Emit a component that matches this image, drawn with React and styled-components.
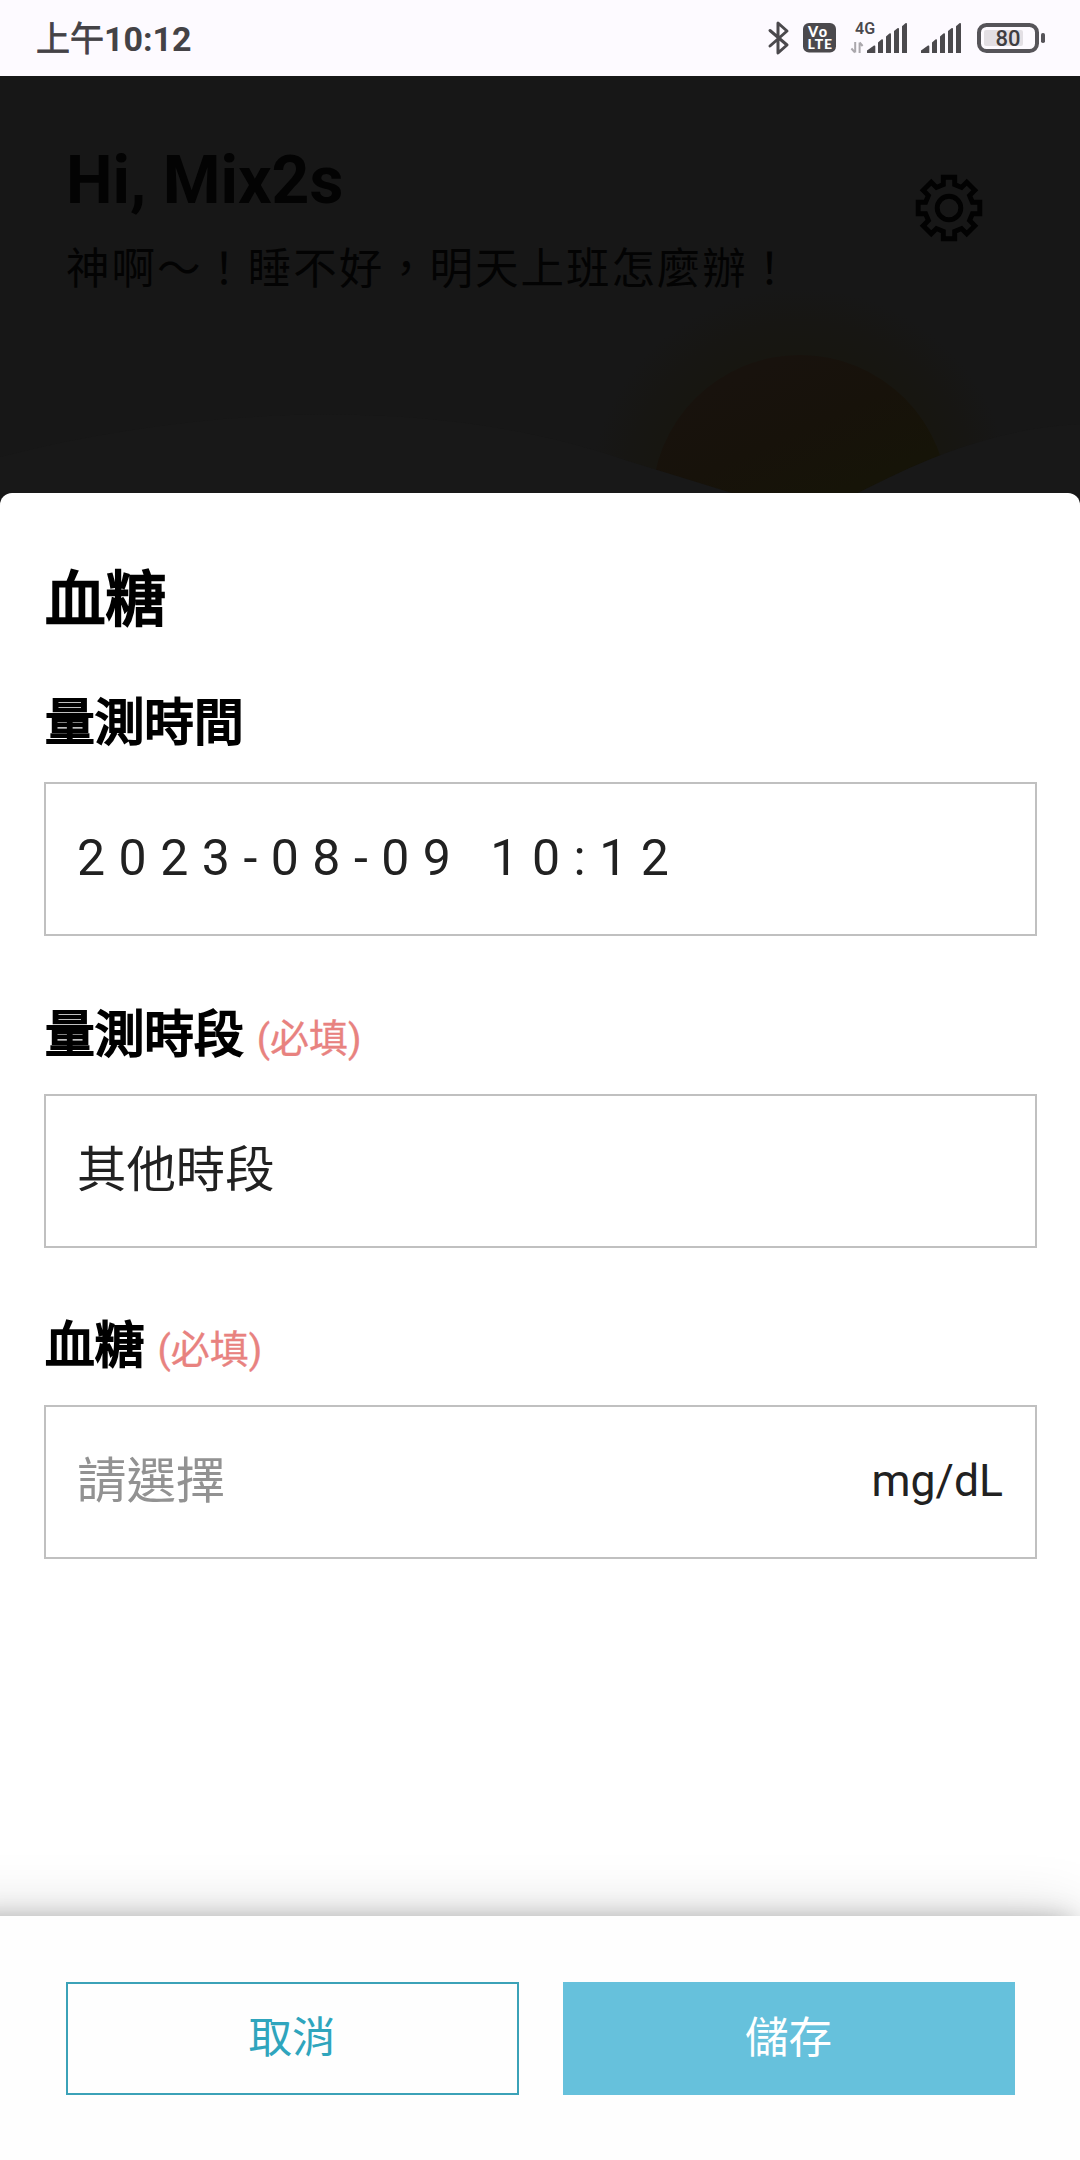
import React from "react";
import styled, { createGlobalStyle } from "styled-components";

const GlobalStyle = createGlobalStyle`
  *, *::before, *::after { box-sizing: border-box; }
  html, body { margin: 0; padding: 0; background: #fff; }
`;

const Screen = styled.div`
  width: 1080px;
  height: 2160px;
  overflow: hidden;
  display: flex;
  flex-direction: column;
  background: #171717;
  font-family: Roboto, "Noto Sans CJK TC", sans-serif;
  color: #212121;
`;

const StatusBar = styled.header`
  flex: none;
  height: 76px;
  padding: 0 35px 0 36px;
  display: flex;
  align-items: center;
  justify-content: space-between;
  background: #fdfaff;
  color: #444246;
`;

const Clock = styled.div`
  padding-top: 1px;
  font-size: 34px;
  line-height: 76px;
  font-weight: 400;
  -webkit-text-stroke: 0.8px currentColor;
  white-space: nowrap;
`;

const ClockDigits = styled.span`
  font-weight: 700;
  -webkit-text-stroke: 0;
`;

const StatusIcons = styled.div`
  display: flex;
  align-items: center;
  height: 76px;
`;

const StatusIcon = styled.svg`
  display: block;
  flex: none;
  margin-left: ${(p) => p.$gap || 0}px;
  overflow: visible;
`;

const Hero = styled.section`
  flex: none;
  height: 417px;
  display: grid;
  grid-template: 100% / 100%;
`;

const Landscape = styled.svg`
  grid-area: 1 / 1;
  display: block;
`;

const HeroContent = styled.div`
  grid-area: 1 / 1;
  z-index: 1;
  padding: 64px 95px 0 66px;
  display: flex;
  justify-content: space-between;
  align-items: flex-start;
  color: #030303;
`;

const Greeting = styled.h1`
  margin: 0;
  padding-top: 1px;
  font-size: 66px;
  line-height: 80px;
  font-weight: 700;
`;

const Quote = styled.p`
  margin: 19px 0 0;
  font-size: 43.5px;
  line-height: 60px;
  letter-spacing: 1.95px;
  white-space: nowrap;
`;

const SettingsIcon = styled.svg`
  display: block;
  margin-top: 32px;
`;

const Sheet = styled.main`
  flex: 1;
  min-height: 0;
  display: flex;
  flex-direction: column;
  background: #fff;
  border-radius: 12px 12px 0 0;
  overflow: hidden;
`;

const Form = styled.div`
  flex: 1;
  padding: 68px 43px 0 44px;
`;

const Title = styled.h2`
  margin: 0 0 46px;
  padding-left: 1px;
  font-size: 60.5px;
  line-height: 80px;
  font-weight: 400;
  -webkit-text-stroke: 2.5px currentColor;
  color: #000;
`;

const Field = styled.div`
  margin-bottom: ${(p) => p.$space || 0}px;
`;

const Label = styled.div`
  height: 72px;
  margin-bottom: 23px;
  padding-left: 1px;
  font-size: 49.7px;
  line-height: 72px;
  color: #000;
  -webkit-text-stroke: 2.2px currentColor;
  white-space: nowrap;
`;

const Required = styled.span`
  margin-left: 13px;
  font-size: 39px;
  -webkit-text-stroke: 0.3px currentColor;
  color: #e8827f;
`;

const InputBox = styled.div`
  height: 154px;
  padding: 0 32px 3px 31px;
  display: flex;
  align-items: center;
  justify-content: space-between;
  border: 2px solid #c0c0c0;
`;

const Value = styled.span`
  font-size: ${(p) => p.$size || 49.4}px;
  line-height: 72px;
  letter-spacing: ${(p) => p.$spacing || 0}px;
  color: ${(p) => (p.$placeholder ? "#929292" : "#212121")};
`;

const Unit = styled.span`
  font-size: 44.5px;
  line-height: 72px;
`;

const Footer = styled.footer`
  flex: none;
  height: 244px;
  padding: 66px 65px 65px 66px;
  display: grid;
  grid-template-columns: 453px 452px;
  gap: 44px;
  background: #fefefe;
  box-shadow: -20px 15px 24px 12px rgba(0, 0, 0, 0.27), -34px 32px 60px 30px rgba(0, 0, 0, 0.18);
`;

const Button = styled.button`
  appearance: none;
  height: 113px;
  margin: 0;
  padding: 1px 1px 0 0;
  border: 2px solid ${(p) => (p.$primary ? "#66c1dc" : "#3ba2b8")};
  border-radius: 0;
  background: ${(p) => (p.$primary ? "#66c1dc" : "#fefefe")};
  color: ${(p) => (p.$primary ? "#fff" : "#2fa5bd")};
  font-family: inherit;
  font-size: 43.5px;
  line-height: 60px;
`;

function Bluetooth() {
  return (
    <StatusIcon width="22" height="36" viewBox="0 0 22 36" fill="none" stroke="#4b494d" strokeWidth="3" strokeLinejoin="round" strokeLinecap="round">
      <path d="M2 10.5 19 25 10 33V3l9 8L2 26" />
    </StatusIcon>
  );
}

function VoLte() {
  return (
    <StatusIcon $gap={13} width="33" height="30" viewBox="0 0 33 30">
      <rect width="33" height="29.5" rx="6" fill="#4b494d" />
      <g fill="#fff" fontFamily="Lato, sans-serif" fontWeight="900">
        <text x="5" y="13.5" fontSize="14.5" textLength="19">Vo</text>
        <text x="4.6" y="26.3" fontSize="14" textLength="24.5">LTE</text>
      </g>
    </StatusIcon>
  );
}

function Bars() {
  return (
    <g fill="#4b494d">
      <path d="M0 31V28.5L7 23.6Q8.3 23 8.3 24.5V31Z" />
      <path d="M11 31V20.5L14.4 17.4Q16 16.6 16 18.2V31Z" />
      <path d="M19 31V14.5L22.4 11.6Q24 10.8 24 12.4V31Z" />
      <path d="M27 31V9L30.4 6.2Q32 5.4 32 7V31Z" />
      <path d="M35 31V4.2L38.4 1.3Q40 .5 40 2.2V31Z" />
    </g>
  );
}

function MobileData() {
  return (
    <StatusIcon $gap={15} width="56" height="44" viewBox="0 -6 56 44">
      <text x="4" y="11.5" fontSize="16" fontWeight="600" fontFamily="Roboto, sans-serif" fill="#4b494d">4G</text>
      <path d="M4.2 20v10.5M.4 26.5l3.6 4M8.6 31V20.5M8.6 20.5l3 3.5" stroke="#aaa7ac" strokeWidth="2" fill="none" />
      <g transform="translate(16 0)"><Bars /></g>
    </StatusIcon>
  );
}

function Signal() {
  return (
    <StatusIcon $gap={14} width="40" height="32" viewBox="0 0 40 32">
      <Bars />
    </StatusIcon>
  );
}

function Battery() {
  return (
    <StatusIcon $gap={16} width="68" height="30" viewBox="0 0 68 30">
      <rect x="2" y="2" width="58" height="26" rx="7.5" fill="none" stroke="#565459" strokeWidth="4" />
      <rect x="7" y="7" width="39" height="16" rx="2" fill="#e3dfe4" />
      <rect x="64" y="10" width="4" height="10" rx="1.8" fill="#565459" />
      <text x="18.5" y="23" fontSize="22" fontWeight="500" fontFamily="Roboto, sans-serif" fill="#3f3d41">80</text>
    </StatusIcon>
  );
}

const TOOTH = [[-5.7, -23.4], [-5.7, -30.8], [5.7, -30.8], [5.7, -23.4]];
const gearPoints = Array.from({ length: 8 }, (_, i) => {
  const a = (i * Math.PI) / 4;
  return TOOTH.map(([x, y]) =>
    [x * Math.cos(a) - y * Math.sin(a), x * Math.sin(a) + y * Math.cos(a)]
      .map((v) => v.toFixed(2))
      .join(",")
  ).join(" ");
}).join(" ");

function Gear() {
  return (
    <SettingsIcon width="72" height="72" viewBox="-36 -36 72 72" fill="none" stroke="#020202" strokeWidth="4.9">
      <polygon points={gearPoints} />
      <circle r="11.8" />
    </SettingsIcon>
  );
}

function Sunrise() {
  return (
    <Landscape width="1080" height="417" viewBox="0 76 1080 417">
      <defs>
        <radialGradient id="halo" gradientUnits="userSpaceOnUse" cx="800" cy="500" r="212">
          <stop offset="0.66" stopColor="#171610" />
          <stop offset="0.84" stopColor="#171613" />
          <stop offset="1" stopColor="#171717" />
        </radialGradient>
        <linearGradient id="sun" x1="0.35" y1="0.05" x2="0.55" y2="0.5">
          <stop offset="0" stopColor="#18120d" />
          <stop offset="0.5" stopColor="#17120a" />
          <stop offset="1" stopColor="#161408" />
        </linearGradient>
      </defs>
      <circle cx="800" cy="500" r="212" fill="url(#halo)" />
      <circle cx="800" cy="503" r="148" fill="url(#sun)" />
      <path d="M0 457C200 405 440 395 625 460L745 497H0Z" fill="#181818" />
      <path d="M850 497C930 455 1000 428 1080 424V497Z" fill="#181818" />
    </Landscape>
  );
}

export default function App() {
  return (
    <>
      <GlobalStyle />
      <Screen lang="zh-Hant">
        <StatusBar>
          <Clock>上午<ClockDigits>10:12</ClockDigits></Clock>
          <StatusIcons>
            <Bluetooth />
            <VoLte />
            <MobileData />
            <Signal />
            <Battery />
          </StatusIcons>
        </StatusBar>
        <Hero>
          <Sunrise />
          <HeroContent>
            <div>
              <Greeting>Hi, Mix2s</Greeting>
              <Quote>神啊～！睡不好，明天上班怎麼辦！</Quote>
            </div>
            <Gear />
          </HeroContent>
        </Hero>
        <Sheet>
          <Form>
            <Title>血糖</Title>
            <Field $space={63}>
              <Label>量測時間</Label>
              <InputBox>
                <Value $size={50} $spacing={13.5}>2023-08-09 10:12</Value>
              </InputBox>
            </Field>
            <Field $space={62}>
              <Label>量測時段<Required>(必填)</Required></Label>
              <InputBox>
                <Value>其他時段</Value>
              </InputBox>
            </Field>
            <Field>
              <Label>血糖<Required>(必填)</Required></Label>
              <InputBox>
                <Value $placeholder>請選擇</Value>
                <Unit>mg/dL</Unit>
              </InputBox>
            </Field>
          </Form>
          <Footer>
            <Button>取消</Button>
            <Button $primary>儲存</Button>
          </Footer>
        </Sheet>
      </Screen>
    </>
  );
}
